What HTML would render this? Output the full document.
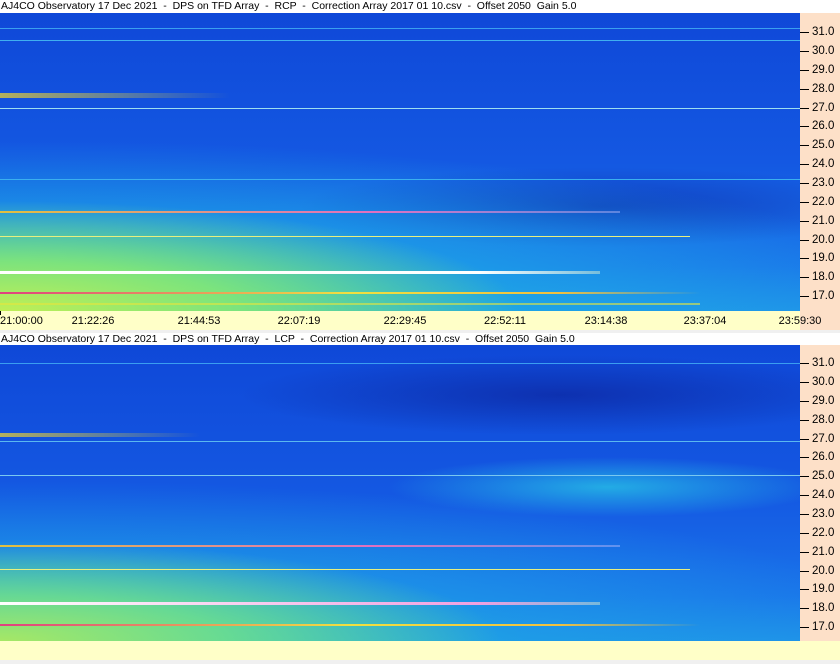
<!DOCTYPE html>
<html><head><style>
*{margin:0;padding:0}
body{width:840px;height:664px;position:relative;background:#f0f0f0;font-family:"Liberation Sans",sans-serif;overflow:hidden}
.a{position:absolute}
.title{left:0;width:840px;height:13px;background:#fff;font-size:10.5px;line-height:13px;color:#000;white-space:pre;padding-left:1px}
.spec{left:0;width:800px;overflow:hidden}
.axis{left:800px;width:40px;background:#fde0c8}
.tk{position:absolute;left:0;width:9px;height:1px;background:#000}
.lb{position:absolute;left:12px;font-size:11.5px;line-height:12px;color:#000}
.ln{position:absolute;left:0;width:800px}
.tl{position:absolute;font-size:11px;top:4px;color:#000;transform:translateX(-50%);white-space:nowrap}
</style></head><body>
<div class="a title" style="top:0">AJ4CO Observatory 17 Dec 2021  -  DPS on TFD Array  -  RCP  -  Correction Array 2017 01 10.csv  -  Offset 2050  Gain 5.0</div>
<div class="a spec" style="top:13px;height:298px;background:
radial-gradient(ellipse 520px 110px at 0% 100%,rgba(200,240,80,.95),rgba(140,235,110,.85) 45%,rgba(60,200,200,0) 100%),
radial-gradient(ellipse 900px 170px at 5% 100%,rgba(40,215,190,.95),rgba(30,175,230,.6) 55%,rgba(20,100,230,0) 100%),
radial-gradient(ellipse 300px 40px at 75% 65%,rgba(10,30,150,.5),rgba(10,30,150,0)),
linear-gradient(#0f48d8,#1458e2 50%,#1a74ea 85%,#1f90e8)">
<div class="ln" style="top:15px;height:1px;background:#3aa0f0"></div>
<div class="ln" style="top:27px;height:1px;background:#40b0f0"></div>
<div class="ln" style="top:80px;height:5px;width:230px;background:linear-gradient(90deg,rgba(220,200,60,.8),rgba(220,200,60,0))"></div>
<div class="ln" style="top:95px;height:1px;background:#9ee0f0"></div>
<div class="ln" style="top:166px;height:1px;background:#3ab0f0"></div>
<div class="ln" style="top:198px;height:2px;width:620px;background:linear-gradient(90deg,#e0c040,#e070c0 60%,rgba(200,200,255,.4))"></div>
<div class="ln" style="top:223px;height:1px;width:690px;background:#e8f080"></div>
<div class="ln" style="top:258px;height:3px;width:600px;background:linear-gradient(90deg,#fff,#fff 80%,rgba(255,255,200,.4))"></div>
<div class="ln" style="top:279px;height:2px;width:700px;background:linear-gradient(90deg,#e04080,#f0e040 50%,#f0c040 80%,rgba(200,200,100,0))"></div>
<div class="ln" style="top:290px;height:2px;width:700px;background:rgba(230,230,60,.6)"></div>
</div>
<div class="a axis" style="top:13px;height:298px">
<div class="tk" style="top:19px"></div><div class="lb" style="top:13px">31.0</div>
<div class="tk" style="top:38px"></div><div class="lb" style="top:32px">30.0</div>
<div class="tk" style="top:57px"></div><div class="lb" style="top:51px">29.0</div>
<div class="tk" style="top:76px"></div><div class="lb" style="top:70px">28.0</div>
<div class="tk" style="top:95px"></div><div class="lb" style="top:89px">27.0</div>
<div class="tk" style="top:113px"></div><div class="lb" style="top:107px">26.0</div>
<div class="tk" style="top:132px"></div><div class="lb" style="top:126px">25.0</div>
<div class="tk" style="top:151px"></div><div class="lb" style="top:145px">24.0</div>
<div class="tk" style="top:170px"></div><div class="lb" style="top:164px">23.0</div>
<div class="tk" style="top:189px"></div><div class="lb" style="top:183px">22.0</div>
<div class="tk" style="top:208px"></div><div class="lb" style="top:202px">21.0</div>
<div class="tk" style="top:227px"></div><div class="lb" style="top:221px">20.0</div>
<div class="tk" style="top:245px"></div><div class="lb" style="top:239px">19.0</div>
<div class="tk" style="top:264px"></div><div class="lb" style="top:258px">18.0</div>
<div class="tk" style="top:283px"></div><div class="lb" style="top:277px">17.0</div>
</div>
<div class="a" style="top:311px;left:0;width:840px;height:19px;background:linear-gradient(90deg,#ffffc8 800px,#fde0c8 800px)">
<div class="tl" style="left:0;transform:none">21:00:00</div>
<div class="tl" style="left:93px">21:22:26</div>
<div class="tl" style="left:199px">21:44:53</div>
<div class="tl" style="left:299px">22:07:19</div>
<div class="tl" style="left:405px">22:29:45</div>
<div class="tl" style="left:505px">22:52:11</div>
<div class="tl" style="left:606px">23:14:38</div>
<div class="tl" style="left:705px">23:37:04</div>
<div class="tl" style="left:800px">23:59:30</div>
</div>
<div class="a" style="top:311px;left:0;width:1px;height:4px;background:#000"></div>
<div class="a title" style="top:333px">AJ4CO Observatory 17 Dec 2021  -  DPS on TFD Array  -  LCP  -  Correction Array 2017 01 10.csv  -  Offset 2050  Gain 5.0</div>
<div class="a spec" style="top:345px;height:296px;background:
radial-gradient(ellipse 500px 100px at 0% 100%,rgba(180,235,90,.9),rgba(120,228,130,.8) 45%,rgba(60,200,200,0) 100%),
radial-gradient(ellipse 880px 160px at 5% 100%,rgba(40,205,205,.9),rgba(30,165,230,.55) 55%,rgba(20,100,230,0) 100%),
radial-gradient(ellipse 220px 30px at 76% 142px,rgba(40,200,230,.75),rgba(40,190,230,0)),
radial-gradient(ellipse 320px 40px at 70% 50px,rgba(10,25,140,.55),rgba(10,25,140,0)),
linear-gradient(#0f48d8,#1458e2 50%,#1a74ea 85%,#1f90e8)">
<div class="ln" style="top:18px;height:1px;background:#3a9ef0"></div>
<div class="ln" style="top:88px;height:4px;width:200px;background:linear-gradient(90deg,rgba(220,200,60,.8),rgba(220,200,60,0))"></div>
<div class="ln" style="top:96px;height:1px;background:#5ab8f0"></div>
<div class="ln" style="top:130px;height:1px;background:#7ac8f0"></div>
<div class="ln" style="top:200px;height:2px;width:620px;background:linear-gradient(90deg,#e0c040,#e070c0 60%,rgba(200,200,255,.4))"></div>
<div class="ln" style="top:224px;height:1px;width:690px;background:#e8f080"></div>
<div class="ln" style="top:257px;height:3px;width:600px;background:linear-gradient(90deg,#fff,#f0a0e0 80%,rgba(255,255,200,.4))"></div>
<div class="ln" style="top:279px;height:2px;width:700px;background:linear-gradient(90deg,#e04080,#f0e040 50%,#f0c040 80%,rgba(200,200,100,0))"></div>
</div>
<div class="a axis" style="top:345px;height:296px">
<div class="tk" style="top:18px"></div><div class="lb" style="top:12px">31.0</div>
<div class="tk" style="top:37px"></div><div class="lb" style="top:31px">30.0</div>
<div class="tk" style="top:56px"></div><div class="lb" style="top:50px">29.0</div>
<div class="tk" style="top:75px"></div><div class="lb" style="top:69px">28.0</div>
<div class="tk" style="top:94px"></div><div class="lb" style="top:88px">27.0</div>
<div class="tk" style="top:112px"></div><div class="lb" style="top:106px">26.0</div>
<div class="tk" style="top:131px"></div><div class="lb" style="top:125px">25.0</div>
<div class="tk" style="top:150px"></div><div class="lb" style="top:144px">24.0</div>
<div class="tk" style="top:169px"></div><div class="lb" style="top:163px">23.0</div>
<div class="tk" style="top:188px"></div><div class="lb" style="top:182px">22.0</div>
<div class="tk" style="top:207px"></div><div class="lb" style="top:201px">21.0</div>
<div class="tk" style="top:226px"></div><div class="lb" style="top:220px">20.0</div>
<div class="tk" style="top:244px"></div><div class="lb" style="top:238px">19.0</div>
<div class="tk" style="top:263px"></div><div class="lb" style="top:257px">18.0</div>
<div class="tk" style="top:282px"></div><div class="lb" style="top:276px">17.0</div>
</div>
<div class="a" style="top:641px;left:0;width:840px;height:19px;background:#ffffc8"></div>
</body></html>
